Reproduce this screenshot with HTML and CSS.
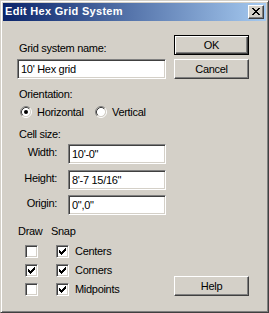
FILE: index.html
```html
<!DOCTYPE html>
<html>
<head>
<meta charset="utf-8">
<link rel="stylesheet" href="styles.css">
</head>
<body>
<div class="win">
  <div class="title">
    <span class="title-text">Edit Hex Grid System</span>
    <div class="close">
      <svg width="8" height="7" viewBox="0 0 8 7" shape-rendering="crispEdges"><path fill="#000" d="M0 0h2v1h-2z M6 0h2v1h-2z M1 1h2v1h-2z M5 1h2v1h-2z M2 2h4v1h-4z M3 3h2v1h-2z M2 4h4v1h-4z M1 5h2v1h-2z M5 5h2v1h-2z M0 6h2v1h-2z M6 6h2v1h-2z"/></svg>
    </div>
  </div>
  <div class="body">
    <div class="left">
      <div class="lbl l-name">Grid system name:</div>
      <div class="edit wide">10' Hex grid</div>
      <div class="lbl l-orient">Orientation:</div>
      <div class="radios">
        <div class="radio first">
          <svg class="rb" width="12" height="12" viewBox="0 0 12 12"><circle cx="6" cy="6" r="4.2" fill="#fff"/><path d="M2.11 9.89A5.5 5.5 0 0 1 9.89 2.11" stroke="#808080" fill="none"/><path d="M9.89 2.11A5.5 5.5 0 0 1 2.11 9.89" stroke="#fff" fill="none"/><path d="M2.82 9.18A4.5 4.5 0 0 1 9.18 2.82" stroke="#404040" fill="none"/><path d="M9.18 2.82A4.5 4.5 0 0 1 2.82 9.18" stroke="#d4d0c8" fill="none"/><circle cx="6" cy="6" r="2" fill="#000"/></svg>
          <span>Horizontal</span>
        </div>
        <div class="radio">
          <svg class="rb" width="12" height="12" viewBox="0 0 12 12"><circle cx="6" cy="6" r="4.2" fill="#fff"/><path d="M2.11 9.89A5.5 5.5 0 0 1 9.89 2.11" stroke="#808080" fill="none"/><path d="M9.89 2.11A5.5 5.5 0 0 1 2.11 9.89" stroke="#fff" fill="none"/><path d="M2.82 9.18A4.5 4.5 0 0 1 9.18 2.82" stroke="#404040" fill="none"/><path d="M9.18 2.82A4.5 4.5 0 0 1 2.82 9.18" stroke="#d4d0c8" fill="none"/></svg>
          <span>Vertical</span>
        </div>
      </div>
      <div class="lbl l-cell">Cell size:</div>
      <div class="field f1"><span class="flbl">Width:</span><div class="edit">10'-0"</div></div>
      <div class="field f2"><span class="flbl">Height:</span><div class="edit">8'-7 15/16"</div></div>
      <div class="field f3"><span class="flbl">Origin:</span><div class="edit">0",0"</div></div>
      <div class="lbl draw-snap"><span class="ds-draw">Draw</span><span>Snap</span></div>
      <div class="chk c1">
        <span class="cb"></span>
        <span class="cb cb2"><svg width="7" height="7" viewBox="0 0 7 7" shape-rendering="crispEdges"><path fill="#000" d="M0 2h1v3h-1z M1 3h1v3h-1z M2 4h1v3h-1z M3 3h1v3h-1z M4 2h1v3h-1z M5 1h1v3h-1z M6 0h1v3h-1z"/></svg></span>
        <span class="ctext">Centers</span>
      </div>
      <div class="chk">
        <span class="cb"><svg width="7" height="7" viewBox="0 0 7 7" shape-rendering="crispEdges"><path fill="#000" d="M0 2h1v3h-1z M1 3h1v3h-1z M2 4h1v3h-1z M3 3h1v3h-1z M4 2h1v3h-1z M5 1h1v3h-1z M6 0h1v3h-1z"/></svg></span>
        <span class="cb cb2"><svg width="7" height="7" viewBox="0 0 7 7" shape-rendering="crispEdges"><path fill="#000" d="M0 2h1v3h-1z M1 3h1v3h-1z M2 4h1v3h-1z M3 3h1v3h-1z M4 2h1v3h-1z M5 1h1v3h-1z M6 0h1v3h-1z"/></svg></span>
        <span class="ctext">Corners</span>
      </div>
      <div class="chk">
        <span class="cb"></span>
        <span class="cb cb2"><svg width="7" height="7" viewBox="0 0 7 7" shape-rendering="crispEdges"><path fill="#000" d="M0 2h1v3h-1z M1 3h1v3h-1z M2 4h1v3h-1z M3 3h1v3h-1z M4 2h1v3h-1z M5 1h1v3h-1z M6 0h1v3h-1z"/></svg></span>
        <span class="ctext">Midpoints</span>
      </div>
    </div>
    <div class="right">
      <div class="btn default">OK</div>
      <div class="btn cancel">Cancel</div>
      <div class="btn help">Help</div>
    </div>
  </div>
</div>
</body>
</html>
```
FILE: styles.css
```css
* { box-sizing: border-box; }
html, body { margin: 0; padding: 0; }
body {
  background: #d4d0c8;
  font-family: "Liberation Sans", Arial, sans-serif;
  font-size: 11px;
  color: #000;
}
.win {
  width: 269px;
  height: 313px;
  border: 1px solid;
  border-color: #d4d0c8 #404040 #404040 #d4d0c8;
  box-shadow: inset 1px 1px #fff, inset -1px -1px #808080;
  padding: 2px;
  display: flex;
  flex-direction: column;
  background: #d4d0c8;
}
.title {
  height: 18px;
  flex: none;
  background: linear-gradient(to right, #0a246a, #a6caf0);
  display: flex;
  align-items: flex-start;
  justify-content: space-between;
  padding: 2px 2px 0 2px;
}
.title-text {
  color: #fff;
  font-weight: bold;
  letter-spacing: 0.3px;
  line-height: 14px;
  margin-top: -1px;
  white-space: nowrap;
}
.close {
  width: 16px;
  height: 14px;
  background: #d4d0c8;
  border: 1px solid;
  border-color: #fff #404040 #404040 #fff;
  box-shadow: inset -1px -1px #808080;
}
.close svg { display: block; margin: 2px 0 0 3px; }
.body {
  flex: 1;
  display: flex;
  gap: 8px;
  padding: 14px 16px 14px 14px;
}
.left { width: 149px; display: flex; flex-direction: column; }
.right { width: 75px; display: flex; flex-direction: column; }
.lbl { line-height: 13px; height: 13px; white-space: nowrap; letter-spacing: -0.3px; }
.l-name { margin-top: 7px; padding-left: 2px; }
.edit {
  height: 20px;
  border: 1px solid;
  border-color: #808080 #fff #fff #808080;
  box-shadow: inset 1px 1px #404040, inset -1px -1px #d4d0c8;
  background: #fff;
  line-height: 16px;
  padding: 1px 0 0 3px;
  white-space: nowrap;
  letter-spacing: -0.3px;
}
.wide { margin-top: 4px; }
.l-orient { margin-top: 9px; padding-left: 2px; }
.radios { margin-top: 5px; display: flex; height: 13px; padding-left: 3px; }
.radio { display: flex; align-items: flex-start; gap: 5px; line-height: 13px; letter-spacing: -0.3px; }
.radio.first { width: 75px; }
.rb { display: block; flex: none; }
.l-cell { margin-top: 9px; padding-left: 2px; }
.field { display: flex; }
.f1 { margin-top: 3px; }
.f2 { margin-top: 6px; }
.f3 { margin-top: 5px; }
.flbl {
  width: 40px;
  text-align: right;
  margin-top: 2px;
  line-height: 13px;
  margin-right: 11px;
  white-space: nowrap;
  letter-spacing: -0.3px;
}
.field .edit { width: 98px; }
.draw-snap { margin-top: 10px; padding-left: 1px; display: flex; }
.ds-draw { width: 33px; }
.chk { display: flex; height: 13px; line-height: 13px; padding-left: 8px; margin-top: 6px; letter-spacing: -0.3px; }
.c1 { margin-top: 7px; }
.cb {
  width: 13px;
  height: 13px;
  flex: none;
  border: 1px solid;
  border-color: #808080 #fff #fff #808080;
  box-shadow: inset 1px 1px #404040, inset -1px -1px #d4d0c8;
  background: #fff;
}
.cb svg { display: block; margin: 2px 0 0 2px; }
.cb2 { margin-left: 18px; }
.ctext { margin-left: 6px; white-space: nowrap; }
.btn {
  width: 75px;
  height: 20px;
  border: 1px solid;
  border-color: #fff #404040 #404040 #fff;
  box-shadow: inset -1px -1px #808080;
  background: #d4d0c8;
  text-align: center;
  line-height: 18px;
  letter-spacing: -0.3px;
}
.btn.default {
  border-color: #000;
  box-shadow: inset 1px 1px #fff, inset -1px -1px #404040, inset -2px -2px #808080;
}
.cancel { margin-top: 4px; }
.help { margin-top: auto; }
```
